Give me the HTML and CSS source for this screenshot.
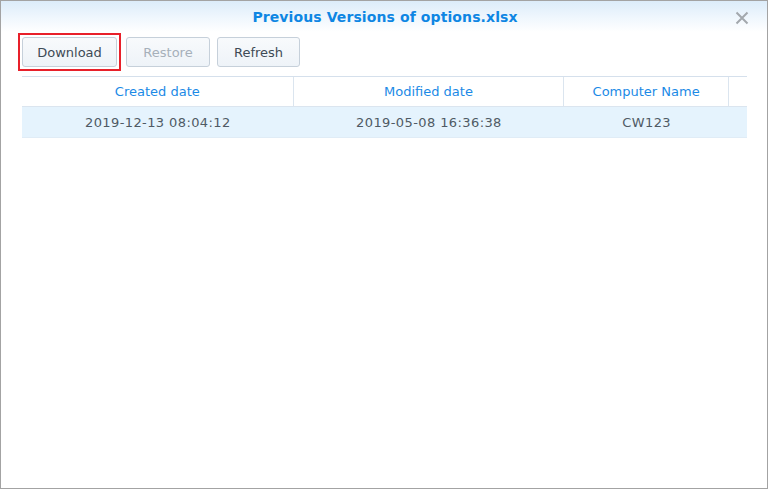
FILE: index.html
```html
<!DOCTYPE html>
<html>
<head>
<meta charset="utf-8">
<link rel="stylesheet" href="styles.css">
</head>
<body>
<div class="dialog">
  <div class="header">
    <div class="title">Previous Versions of options.xlsx</div>
    <svg class="close" width="14" height="14" viewBox="0 0 14 14"><path d="M1.5 1.5 L12.5 12.5 M12.5 1.5 L1.5 12.5" stroke="#a3a8ad" stroke-width="2" fill="none"/></svg>
  </div>
  <div class="toolbar">
    <button class="btn btn-download">Download</button>
    <button class="btn btn-restore" disabled>Restore</button>
    <button class="btn btn-refresh">Refresh</button>
  </div>
  <div class="grid">
    <div class="row head">
      <div class="cell c1">Created date</div>
      <div class="cell c2">Modified date</div>
      <div class="cell c3">Computer Name</div>
      <div class="cell c4"></div>
    </div>
    <div class="row data">
      <div class="cell c1">2019-12-13 08:04:12</div>
      <div class="cell c2">2019-05-08 16:36:38</div>
      <div class="cell c3">CW123</div>
      <div class="cell c4"></div>
    </div>
  </div>
</div>
</body>
</html>
```
FILE: styles.css
```css
html, body {
  margin: 0;
  padding: 0;
  background: #ffffff;
}
.dialog {
  width: 768px;
  height: 489px;
  box-sizing: border-box;
  border: 1px solid #a3a3a3;
  font-family: "DejaVu Sans", Verdana, sans-serif;
  font-size: 13px;
  background: #ffffff;
}
.header {
  position: relative;
  height: 31px;
  background: linear-gradient(to bottom, #dcecfa 0%, #eef6fd 50%, #ffffff 100%);
  display: flex;
  align-items: center;
  justify-content: center;
}
.title {
  font-weight: bold;
  font-size: 14px;
  color: #0e86e3;
  margin-top: 1px;
  margin-left: 2px;
  letter-spacing: 0.1px;
}
.close {
  position: absolute;
  right: 18px;
  top: 10px;
}
.toolbar {
  display: flex;
  padding: 5px 0 0 21px;
  height: 30px;
}
.btn {
  position: relative;
  height: 30px;
  box-sizing: border-box;
  border: 1px solid #c6d0da;
  border-radius: 3px;
  background: linear-gradient(to bottom, #f8fafc, #eef3f8);
  font-family: "DejaVu Sans", Verdana, sans-serif;
  font-size: 13px;
  color: #3e4a56;
  padding: 0;
  margin: 0;
}
.btn-download {
  width: 95px;
  margin-right: 9px;
}
.btn-download::after {
  content: "";
  position: absolute;
  left: -5px;
  top: -5px;
  right: -5px;
  bottom: -5px;
  border: 2px solid #e8202a;
}
.btn-restore {
  width: 84px;
  margin-right: 7px;
  color: #a6b0ba;
}
.btn-refresh {
  width: 83px;
}
.grid {
  margin: 9px 20px 0 21px;
  border-top: 1px solid #d5e0ec;
}
.row {
  display: flex;
}
.cell {
  box-sizing: border-box;
  display: flex;
  align-items: center;
  justify-content: center;
}
.head .cell {
  height: 30px;
  color: #1b8ae6;
  border-right: 1px solid #dbe5ef;
  border-bottom: 1px solid #dbe5ef;
}
.head .c4 {
  border-right: none;
}
.data {
  background: #e5f3fd;
  border-bottom: 1px solid #e0ecf6;
}
.data .cell {
  height: 30px;
  color: #4f5a64;
  letter-spacing: 0.4px;
}
.c1 { width: 272px; }
.c2 { width: 271px; }
.c3 { width: 165px; }
.c4 { width: 18px; }
```
